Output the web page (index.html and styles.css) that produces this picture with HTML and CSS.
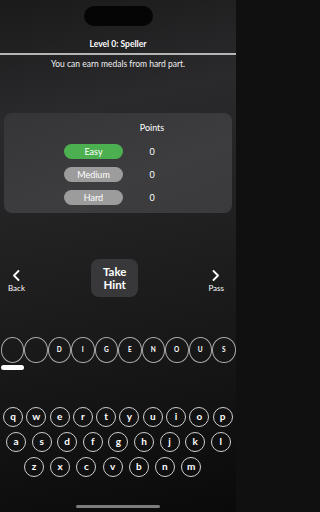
FILE: index.html
```html
<!DOCTYPE html>
<html>
<head>
<meta charset="utf-8">
<link rel="stylesheet" href="styles.css">
</head>
<body>
<div class="screen">
  <div class="notch"></div>
  <div class="title">Level 0: Speller</div>
  <div class="sep"></div>
  <div class="subtitle">You can earn medals from hard part.</div>

  <div class="card">
    <div class="row head"><span class="pill-space"></span><span class="val">Points</span></div>
    <div class="row"><span class="pill easy">Easy</span><span class="val">0</span></div>
    <div class="row"><span class="pill">Medium</span><span class="val">0</span></div>
    <div class="row"><span class="pill">Hard</span><span class="val">0</span></div>
  </div>

  <div class="nav">
    <div class="navbtn">
      <svg width="8" height="11" viewBox="0 0 8 11"><path d="M6.5 1 L2 5.5 L6.5 10" fill="none" stroke="#fff" stroke-width="1.8" stroke-linecap="round" stroke-linejoin="round"/></svg>
      <span>Back</span>
    </div>
    <div class="hint">Take<br>Hint</div>
    <div class="navbtn">
      <svg width="8" height="11" viewBox="0 0 8 11"><path d="M1.5 1 L6 5.5 L1.5 10" fill="none" stroke="#fff" stroke-width="1.8" stroke-linecap="round" stroke-linejoin="round"/></svg>
      <span>Pass</span>
    </div>
  </div>

  <div class="answer">
    <span class="slot"></span><span class="slot"></span><span class="slot">D</span><span class="slot">I</span><span class="slot">G</span><span class="slot">E</span><span class="slot">N</span><span class="slot">O</span><span class="slot">U</span><span class="slot">S</span>
  </div>
  <div class="cursor"></div>

  <div class="kb">
    <div class="kr r1"><span class="key">q</span><span class="key">w</span><span class="key">e</span><span class="key">r</span><span class="key">t</span><span class="key">y</span><span class="key">u</span><span class="key">i</span><span class="key">o</span><span class="key">p</span></div>
    <div class="kr r2"><span class="key">a</span><span class="key">s</span><span class="key">d</span><span class="key">f</span><span class="key">g</span><span class="key">h</span><span class="key">j</span><span class="key">k</span><span class="key">l</span></div>
    <div class="kr r3"><span class="key">z</span><span class="key">x</span><span class="key">c</span><span class="key">v</span><span class="key">b</span><span class="key">n</span><span class="key">m</span></div>
  </div>

  <div class="home"></div>
</div>
</body>
</html>
```
FILE: styles.css
```css
* { box-sizing: border-box; }
html { background: #101010; }
html, body { margin: 0; padding: 0; }
body {
  width: 236px;
  height: 512px;
  overflow: hidden;
  background: #0b0b0b;
  font-family: Lato, "Noto Sans", sans-serif;
  color: #fff;
}
.screen {
  width: 236px;
  height: 512px;
  overflow: hidden;
  display: flex;
  flex-direction: column;
  background: linear-gradient(168deg, #1a1a1b 0%, #2a2a2c 22%, #1d1d1e 55%, #0a0a0a 100%);
}
.notch {
  width: 69px;
  height: 20px;
  margin: 6px auto 0;
  background: #050505;
  border-radius: 10px;
}
.title {
  margin-top: 12px;
  height: 12px;
  line-height: 12px;
  font-size: 8.5px;
  font-weight: 700;
  text-align: center;
}
.sep {
  margin-top: 3px;
  height: 1.6px;
  background: #b5b5b5;
}
.subtitle {
  margin-top: 4px;
  height: 10px;
  line-height: 10px;
  font-size: 8.5px;
  text-align: center;
  color: #f0f0f0;
}
.card {
  margin: 44px 4px 0;
  height: 100px;
  border-radius: 8px;
  background: linear-gradient(160deg, #353537 0%, #3d3d40 60%, #3a3a3c 100%);
  padding: 10px 0 0 60px;
  display: flex;
  flex-direction: column;
  gap: 8px;
}
.row {
  display: flex;
  align-items: center;
  height: 15px;
}
.row.head { height: 10px; margin-bottom: 3px; }
.pill-space { width: 59px; }
.pill {
  width: 59px;
  height: 15px;
  border-radius: 8px;
  background: #9c9c9c;
  font-size: 9px;
  line-height: 15px;
  text-align: center;
  color: #fff;
}
.pill.easy { background: #4caf50; }
.val {
  width: 58px;
  text-align: center;
  font-size: 9px;
}
.nav {
  margin-top: 46px;
  display: flex;
  justify-content: space-between;
  align-items: center;
  padding: 0 12px 0 8px;
}
.navbtn {
  display: flex;
  flex-direction: column;
  align-items: center;
  gap: 2px;
  font-size: 8px;
  padding-top: 8px;
}
.hint {
  width: 47px;
  height: 38px;
  border-radius: 8px;
  background: #38383b;
  font-size: 11.5px;
  font-weight: 700;
  line-height: 13px;
  text-align: center;
  display: flex;
  align-items: center;
  justify-content: center;
  margin-right: 4px;
}
.answer {
  margin-top: 40px;
  display: flex;
  padding-left: 0.5px;
  height: 26px;
}
.slot {
  flex: 0 0 23.5px;
  height: 26px;
  border: 1px solid #a9a9a9;
  border-radius: 50%;
  font-size: 6.5px;
  font-weight: 700;
  display: flex;
  align-items: center;
  justify-content: center;
}
.cursor {
  margin: 2px 0 0 1px;
  width: 23px;
  height: 5px;
  border-radius: 3px;
  background: #fff;
}
.kb {
  margin-top: 37px;
  display: flex;
  flex-direction: column;
  gap: 5px;
}
.kr { display: flex; }
.r1 { padding-left: 3px; gap: 3.3px; }
.r2 { padding-left: 6px; gap: 5.6px; }
.r3 { padding-left: 24px; gap: 6.2px; }
.key {
  width: 20px;
  height: 20px;
  border: 1px solid #cfcfcf;
  border-radius: 50%;
  font-size: 10px;
  font-weight: 700;
  display: flex;
  align-items: center;
  justify-content: center;
  padding-bottom: 1px;
}
.home {
  margin: 28px auto 0;
  width: 84px;
  height: 3px;
  border-radius: 2px;
  background: #7c7c7c;
}
```
